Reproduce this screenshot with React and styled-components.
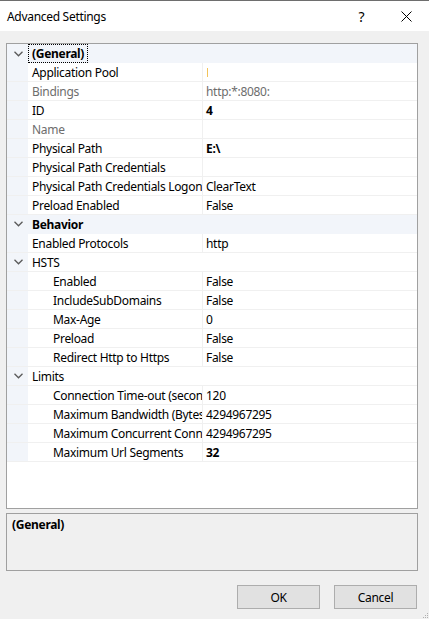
import React from "react";
import styled, { createGlobalStyle } from "styled-components";

const Global = createGlobalStyle`
  html, body { margin: 0; padding: 0; background: #f0f0f0; }
  body { font-family: "Noto Sans", "Open Sans", sans-serif; font-size: 12px; letter-spacing: -0.3px; color: #000; }
  #root { width: 429px; height: 619px; }
`;

const Dialog = styled.div`
  width: 429px;
  height: 619px;
  box-sizing: border-box;
  border-top: 1px solid #6e6e6e;
  background: #f0f0f0;
  display: flex;
  flex-direction: column;
  position: relative;
  overflow: hidden;
`;

const TitleBar = styled.div`
  height: 30px;
  background: #fff;
  display: flex;
  align-items: center;
  padding-left: 7px;
`;

const Title = styled.div`
  flex: 1;
  font-size: 12px;
`;

const TitleButton = styled.div`
  width: 45px;
  height: 30px;
  display: flex;
  align-items: center;
  justify-content: center;
  font-size: 14px;
`;

const Grid = styled.div`
  margin: 12px 11px 0 6px;
  height: 466px;
  box-sizing: border-box;
  border: 1px solid #a0a0a0;
  background: #fff;
  display: flex;
  flex-direction: column;
`;

const Row = styled.div`
  display: grid;
  grid-template-columns: 21px 174px 1fr;
  height: 19px;
  box-sizing: border-box;
  border-bottom: 1px solid ${(p) => (p.$cat ? "#f2f5fa" : "#f0f0f0")};
  background: ${(p) => (p.$cat ? "#f2f5fa" : "#fff")};
`;

const Gutter = styled.div`
  background: #f2f5fa;
  display: flex;
  align-items: center;
  justify-content: center;
  padding-left: 1px;
`;

const NameCell = styled.div`
  display: flex;
  align-items: center;
  padding-left: ${(p) => (p.$indent ? 25 : 4)}px;
  white-space: nowrap;
  overflow: hidden;
  font-weight: ${(p) => (p.$bold ? 700 : 400)};
  color: ${(p) => (p.$disabled ? "#6d6d6d" : "#000")};
`;

const CatName = styled.div`
  grid-column: 2 / 4;
  display: flex;
  align-items: center;
  padding-left: 4px;
  white-space: nowrap;
  font-weight: ${(p) => (p.$bold ? 700 : 400)};
`;

const Focus = styled.span`
  margin-left: -4px;
  padding: 0 3px;
  height: 17px;
  display: flex;
  align-items: center;
  border: 1px dotted #000;
`;

const ValueCell = styled.div`
  display: flex;
  align-items: center;
  padding-left: 3px;
  border-left: 1px solid #f0f0f0;
  white-space: nowrap;
  overflow: hidden;
  font-weight: ${(p) => (p.$bold ? 700 : 400)};
  color: ${(p) => (p.$disabled ? "#6d6d6d" : "#000")};
`;

const Caret = styled.span`
  display: inline-block;
  width: 1px;
  height: 9px;
  background: #f2c35a;
  margin-left: 1px;
`;

const Help = styled.div`
  margin: 4px 11px 0 6px;
  height: 58px;
  box-sizing: border-box;
  border: 1px solid #a0a0a0;
  padding: 2px 5px;
  font-weight: 700;
`;

const Buttons = styled.div`
  display: flex;
  justify-content: flex-end;
  gap: 14px;
  margin: 14px 12px 0 0;
`;

const Button = styled.div`
  width: 83px;
  height: 24px;
  box-sizing: border-box;
  border: 1px solid #adadad;
  background: #e1e1e1;
  display: flex;
  align-items: center;
  justify-content: center;
`;

const Grip = styled.svg`
  position: absolute;
  right: 0;
  bottom: 0;
`;

const Chevron = () => (
  <svg width="9" height="6" viewBox="0 0 9 6">
    <polyline points="0.5,0.8 4.5,4.8 8.5,0.8" fill="none" stroke="#5a5a5a" strokeWidth="1.3" />
  </svg>
);

const rows = [
  { cat: true, name: "(General)", bold: true, focus: true },
  { name: "Application Pool", caret: true },
  { name: "Bindings", value: "http:*:8080:", disabled: true },
  { name: "ID", value: "4", vbold: true },
  { name: "Name", disabled: true },
  { name: "Physical Path", value: "E:\\", vbold: true },
  { name: "Physical Path Credentials" },
  { name: "Physical Path Credentials Logon", value: "ClearText" },
  { name: "Preload Enabled", value: "False" },
  { cat: true, name: "Behavior", bold: true },
  { name: "Enabled Protocols", value: "http" },
  { sub: true, name: "HSTS" },
  { name: "Enabled", value: "False", indent: true },
  { name: "IncludeSubDomains", value: "False", indent: true },
  { name: "Max-Age", value: "0", indent: true },
  { name: "Preload", value: "False", indent: true },
  { name: "Redirect Http to Https", value: "False", indent: true },
  { sub: true, name: "Limits" },
  { name: "Connection Time-out (seconds)", value: "120", indent: true },
  { name: "Maximum Bandwidth (Bytes/second)", value: "4294967295", indent: true },
  { name: "Maximum Concurrent Connections", value: "4294967295", indent: true },
  { name: "Maximum Url Segments", value: "32", indent: true, vbold: true },
];

export default function App() {
  return (
    <>
      <Global />
      <Dialog>
        <TitleBar>
          <Title>Advanced Settings</Title>
          <TitleButton>?</TitleButton>
          <TitleButton>
            <svg width="11" height="11" viewBox="0 0 11 11">
              <path d="M0.5 0.5 L10.5 10.5 M10.5 0.5 L0.5 10.5" stroke="#000" strokeWidth="1" />
            </svg>
          </TitleButton>
        </TitleBar>
        <Grid>
          {rows.map((r, i) =>
            r.cat || r.sub ? (
              <Row key={i} $cat={r.cat}>
                <Gutter>
                  <Chevron />
                </Gutter>
                <CatName $bold={r.bold}>
                  {r.focus ? <Focus>{r.name}</Focus> : r.name}
                </CatName>
              </Row>
            ) : (
              <Row key={i}>
                <Gutter />
                <NameCell $indent={r.indent} $disabled={r.disabled}>
                  {r.name}
                </NameCell>
                <ValueCell $bold={r.vbold} $disabled={r.disabled}>
                  {r.caret ? <Caret /> : r.value}
                </ValueCell>
              </Row>
            )
          )}
        </Grid>
        <Help>(General)</Help>
        <Buttons>
          <Button>OK</Button>
          <Button>Cancel</Button>
        </Buttons>
        <Grip width="6" height="6" viewBox="0 0 6 6">
          <rect x="4" y="0" width="1" height="1" fill="#b0b0b0" />
          <rect x="2" y="2" width="1" height="1" fill="#b0b0b0" />
          <rect x="4" y="2" width="1" height="1" fill="#b0b0b0" />
          <rect x="0" y="4" width="1" height="1" fill="#b0b0b0" />
          <rect x="2" y="4" width="1" height="1" fill="#b0b0b0" />
          <rect x="4" y="4" width="1" height="1" fill="#b0b0b0" />
        </Grip>
      </Dialog>
    </>
  );
}
